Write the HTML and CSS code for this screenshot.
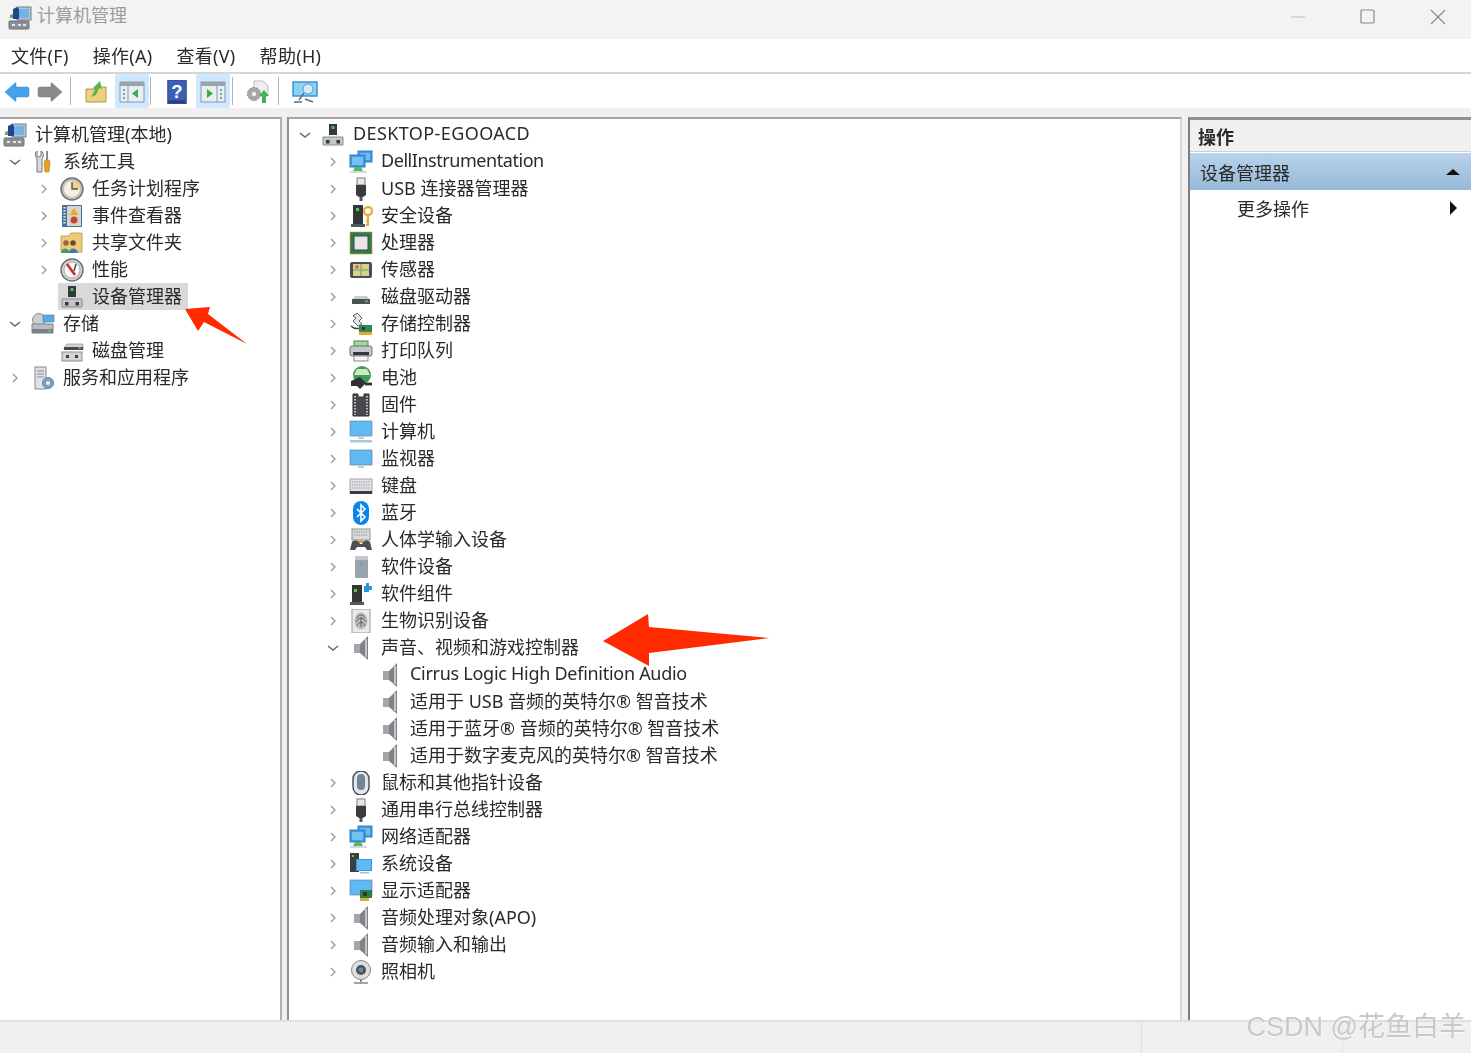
FILE: index.html
```html
<!DOCTYPE html>
<html>
<head>
  <meta charset="utf-8">
  <title>计算机管理</title>
  <link rel="stylesheet" href="styles.css">
</head>
<body>
  <!-- icon sprite -->
  <svg class="sprite" xmlns="http://www.w3.org/2000/svg">
    <symbol id="chev-r" viewBox="0 0 16 16"><path d="M6 4l4 4-4 4" fill="none" stroke="#9a9a9a" stroke-width="1.4"/></symbol>
    <symbol id="chev-d" viewBox="0 0 16 16"><path d="M3 6l5 4 5-4" fill="none" stroke="#666" stroke-width="1.4"/></symbol>

    <symbol id="mgmt" viewBox="0 0 24 24">
      <rect x="9" y="1" width="14" height="13" fill="#b9c4cf" stroke="#77808a"/><rect x="11" y="3" width="10" height="9" fill="#6fb3e8"/>
      <path d="M5 3l4-2 2 2v10H5z" fill="#23458f"/><path d="M2 9l3-1v4H2z" fill="#6aa85c"/>
      <rect x="1" y="15" width="20" height="8" rx="1" fill="#8b9097" stroke="#6a6f76"/><rect x="4" y="18" width="3" height="2" fill="#e4e6e8"/><rect x="10" y="18" width="3" height="2" fill="#e4e6e8"/><rect x="15" y="18" width="3" height="2" fill="#e4e6e8"/>
    </symbol>
    <symbol id="tools" viewBox="0 0 24 24">
      <path d="M6 1v5l2 1 2-1V1c2 1 3 3 2 6l-1 2v13H6V9L5 7C4 5 4 2 6 1z" fill="#d8dadc" stroke="#777"/>
      <rect x="15" y="1" width="2" height="9" fill="#8a8a8a"/><path d="M14 10h4l1 3-1 9h-4l-1-9z" fill="#e6a320" stroke="#b27a10" stroke-width=".6"/>
    </symbol>
    <symbol id="clock" viewBox="0 0 24 24">
      <circle cx="12" cy="12" r="11" fill="#c0c0bd" stroke="#6c6f72" stroke-width="1.4"/><circle cx="12" cy="12" r="8" fill="#f6f1df"/>
      <path d="M12 12V4a8 8 0 0 1 8 8z" fill="#f0d283"/><path d="M12 5v7h6" fill="none" stroke="#555" stroke-width="1.4"/>
    </symbol>
    <symbol id="event" viewBox="0 0 24 24">
      <rect x="2" y="1" width="20" height="22" rx="1" fill="#3f6f9f"/><rect x="7" y="2" width="14" height="20" fill="#d9d4c4"/>
      <path d="M4.500 3v18" stroke="#dbe1e7" stroke-width="2.4" stroke-dasharray="1.5 1.5"/>
      <path d="M14 4l4 7h-8z" fill="#e8a820"/><circle cx="14" cy="16" r="3.500" fill="#c9433a"/>
    </symbol>
    <symbol id="shared" viewBox="0 0 24 24">
      <path d="M1 5h8l2-3h11v19H1z" fill="#eecb78" stroke="#b1924a" stroke-width=".8"/>
      <circle cx="6" cy="12" r="2.800" fill="#a0623a"/><circle cx="13" cy="12" r="2.800" fill="#6e4a30"/>
      <path d="M1 22c0-6 8-6 9 0z" fill="#3f9e63"/><path d="M9 22c0-6 8-6 9 0z" fill="#3b78c2"/>
    </symbol>
    <symbol id="perf" viewBox="0 0 24 24">
      <circle cx="12" cy="12" r="11" fill="#d2d2d2" stroke="#6c6e70" stroke-width="1.4"/><circle cx="12" cy="12" r="8" fill="#fbfbfb" stroke="#a9a9a9"/>
      <path d="M7 6l8 11" stroke="#c9302c" stroke-width="2.6"/><path d="M16 6l-2 7" stroke="#444" stroke-width="1.4"/>
    </symbol>
    <symbol id="devmgr" viewBox="0 0 24 24">
      <rect x="8" y="1" width="8" height="11" fill="#34373b"/><rect x="10.500" y="3" width="3" height="3" fill="#58b85c"/>
      <path d="M2 14h20v8H2z" fill="#c4c6c8" stroke="#8b8d90"/><rect x="5" y="17" width="3.500" height="3.500" fill="#34373b"/><rect x="15.500" y="17" width="3.500" height="3.500" fill="#34373b"/>
    </symbol>
    <symbol id="storage" viewBox="0 0 24 24">
      <circle cx="8" cy="8" r="6.500" fill="#c9cfd2" stroke="#868b8f"/><rect x="12" y="3" width="11" height="7" fill="#5ea9df" stroke="#3f83ba" stroke-width=".6"/>
      <path d="M1 12h21v9H1z" fill="#b9bdc0" stroke="#7a7e82"/><path d="M1 17h21v4H1z" fill="#7b8084"/><rect x="17" y="18" width="3" height="2" fill="#5fbf60"/>
    </symbol>
    <symbol id="diskmgmt" viewBox="0 0 24 24">
      <path d="M4 9l3-4h16v5H4z" fill="#d2d4d6" stroke="#7b7d80" stroke-width=".6"/><path d="M4 8h19v3H4z" fill="#44484c"/><rect x="18" y="8.500" width="3" height="1.400" fill="#54bf5a"/>
      <rect x="2" y="13" width="20" height="9" fill="#d2d4d6" stroke="#8b8d90"/><rect x="6" y="16" width="3" height="3" fill="#3b3f44"/><rect x="15" y="16" width="3" height="3" fill="#3b3f44"/>
    </symbol>
    <symbol id="services" viewBox="0 0 24 24">
      <rect x="4" y="1" width="11" height="22" fill="#dfe3e7" stroke="#858a90"/><path d="M6 5h7M6 8h7M6 11h7" stroke="#858a90"/>
      <circle cx="17" cy="17" r="5.500" fill="#7c9fc0" stroke="#5f86a9"/><circle cx="17" cy="17" r="2" fill="#eef2f6"/>
    </symbol>
    <symbol id="network" viewBox="0 0 24 24">
      <rect x="9" y="1" width="14" height="11" fill="#3f9be0" stroke="#2f7fbc"/><rect x="11" y="3" width="10" height="7" fill="#6bbcf2"/>
      <rect x="1" y="5" width="15" height="12" fill="#3f9be0" stroke="#2f7fbc"/><rect x="3" y="7" width="11" height="8" fill="#74c1f4"/>
      <path d="M6 17h6l2 4H4z" fill="#58b85c"/><rect x="1" y="21" width="17" height="2" fill="#d7dadc"/>
    </symbol>
    <symbol id="usb" viewBox="0 0 24 24">
      <rect x="8" y="1" width="8" height="7" fill="#e6e8ea" stroke="#7a7d80"/><path d="M7 8h10v10l-3 2h-4l-3-2z" fill="#3a3c3f"/><rect x="10.500" y="20" width="3" height="4" fill="#555"/>
    </symbol>
    <symbol id="security" viewBox="0 0 24 24">
      <rect x="4" y="1" width="10" height="19" fill="#34373a"/><rect x="7" y="4" width="3" height="3" fill="#52c75a"/><rect x="2" y="20" width="14" height="3" fill="#55585b"/>
      <circle cx="19" cy="7" r="4" fill="none" stroke="#e3b23c" stroke-width="2.4"/><path d="M19 11v11M19 17h-2M19 21h-2" stroke="#e3b23c" stroke-width="2.2"/>
    </symbol>
    <symbol id="cpu" viewBox="0 0 24 24">
      <rect x="1" y="1" width="22" height="22" fill="#2f7d4a" stroke="#c79a3a" stroke-dasharray="1.5 1"/><rect x="5" y="5" width="14" height="14" fill="#e6e7e4" stroke="#444"/>
    </symbol>
    <symbol id="sensor" viewBox="0 0 24 24">
      <rect x="1" y="4" width="22" height="16" rx="2" fill="#4a4d51"/><rect x="4" y="6" width="16" height="12" fill="#d7d08e"/><path d="M4 12h16M12 6v12" stroke="#8bb56c" stroke-width="1.600"/><circle cx="8" cy="9" r="2" fill="#d96a5a"/>
    </symbol>
    <symbol id="drive" viewBox="0 0 24 24">
      <path d="M4 14l2-3h12l2 3z" fill="#c9cbcd"/><rect x="3" y="14" width="18" height="5" fill="#4d5156"/><rect x="16" y="15.500" width="3" height="1.600" fill="#55c05c"/>
    </symbol>
    <symbol id="storctl" viewBox="0 0 24 24">
      <path d="M8 1l5 5-3 3 3 3-4 2-5-5 3-3-3-2z" fill="#e4e5e6" stroke="#5c5f63"/><path d="M2 14c3 3 6 3 9 2" fill="none" stroke="#444" stroke-width="1.600"/>
      <rect x="10" y="13" width="13" height="7" fill="#2f8a58"/><rect x="13" y="15" width="3" height="3" fill="#333"/><rect x="10" y="20" width="13" height="3" fill="#e3a92c"/>
    </symbol>
    <symbol id="printer" viewBox="0 0 24 24">
      <rect x="5" y="2" width="14" height="6" fill="#9adf8f" stroke="#6e7175"/><rect x="1" y="7" width="22" height="10" rx="2" fill="#c5c8cb" stroke="#6e7175"/><rect x="4" y="13" width="16" height="3" fill="#33363a"/><rect x="5" y="17" width="14" height="5" fill="#f4f4f4" stroke="#888"/>
    </symbol>
    <symbol id="battery" viewBox="0 0 24 24">
      <circle cx="13" cy="9" r="9" fill="#3f9e4f"/><path d="M8 3h10l3 6H5z" fill="#cfe8c8"/><path d="M2 15l9-4 6 6-6 6-3-3H2z" fill="#2f3235"/><path d="M16 18h7" stroke="#2f3235" stroke-width="2.800"/>
    </symbol>
    <symbol id="firmware" viewBox="0 0 24 24">
      <path d="M4 1h5v3h6V1h5v22H4z" fill="#47494c" stroke="#2c2e30"/><path d="M6 3v19M18 3v19" stroke="#d9d9d9" stroke-dasharray="1.5 1.5" stroke-width="1.600"/>
    </symbol>
    <symbol id="computer" viewBox="0 0 24 24">
      <rect x="1" y="1" width="22" height="15" fill="#2d9be8" stroke="#9fb0bc"/><rect x="2" y="2" width="20" height="13" fill="#5fb9f3"/><rect x="9" y="16" width="6" height="3" fill="#c9ced2"/><rect x="1" y="20" width="22" height="2.500" fill="#a9c8dc"/>
    </symbol>
    <symbol id="monitor" viewBox="0 0 24 24">
      <rect x="1" y="3" width="22" height="15" fill="#2d9be8" stroke="#8fadc4"/><rect x="2" y="4" width="20" height="13" fill="#5fb9f3"/><rect x="9" y="18" width="6" height="3" fill="#c9ced2"/>
    </symbol>
    <symbol id="keyboard" viewBox="0 0 24 24">
      <rect x="1" y="5" width="22" height="14" fill="#dfe1e3" stroke="#a3a6a9"/><path d="M3 8h18M3 11h18M3 14h18" stroke="#a3a6a9" stroke-dasharray="1.5 .8"/><rect x="1" y="17" width="22" height="3" fill="#3a3d40"/>
    </symbol>
    <symbol id="bluetooth" viewBox="0 0 24 24">
      <rect x="4" y="0" width="16" height="24" rx="8" fill="#0a84e6"/><path d="M8 8l8 8-4 4V4l4 4-8 8" fill="none" stroke="#fff" stroke-width="1.600"/>
    </symbol>
    <symbol id="hid" viewBox="0 0 24 24">
      <rect x="3" y="1" width="18" height="11" fill="#d9dbdd" stroke="#8e9194"/><path d="M5 4h14M5 7h14" stroke="#8e9194" stroke-dasharray="1.5 .8"/>
      <path d="M1 22l2-8c1-2 6-2 7 0l1 2h2l1-2c1-2 6-2 7 0l2 8h-5l-2-3H8l-2 3z" fill="#4c5055"/><rect x="10" y="12" width="4" height="3" fill="#e3a03c"/>
    </symbol>
    <symbol id="softdev" viewBox="0 0 24 24">
      <rect x="6" y="1" width="13" height="22" rx="1" fill="#9aa3ab"/><rect x="6" y="1" width="13" height="4" fill="#c2c8ce"/><circle cx="12.500" cy="9" r="1.500" fill="#4aa0e0"/>
    </symbol>
    <symbol id="softcomp" viewBox="0 0 24 24">
      <rect x="3" y="3" width="10" height="17" fill="#34373a"/><rect x="5" y="7" width="3" height="3" fill="#52c75a"/><rect x="1" y="20" width="14" height="3" fill="#55585b"/>
      <path d="M15 4h2V1h3v3h3v4h-3v2h-5z" fill="#2b96dc"/>
    </symbol>
    <symbol id="biometric" viewBox="0 0 24 24">
      <rect x="3" y="0" width="18" height="24" fill="#e9eaeb" stroke="#9a9c9e"/><ellipse cx="12" cy="12" rx="6.500" ry="8.500" fill="#bcbcbc"/>
      <path d="M8 9c2-4 6-4 8 0M7 13c2-5 8-5 10 0M8 17c2-5 6-5 8 0M12 8v10" fill="none" stroke="#5d5f61"/>
    </symbol>
    <symbol id="speaker" viewBox="0 0 24 24">
      <rect x="5" y="8" width="6" height="9" fill="#a3a5a8"/><path d="M11 8l8-8v24l-8-7z" fill="#7f8387"/><path d="M17 3v18" stroke="#c4c6c8" stroke-width="2"/>
    </symbol>
    <symbol id="mouse" viewBox="0 0 24 24">
      <rect x="4" y="0" width="16" height="24" rx="8" fill="#e3e6e9" stroke="#424a55" stroke-width="1.400"/><rect x="8" y="3" width="8" height="16" rx="4" fill="#71859a"/>
    </symbol>
    <symbol id="sysdev" viewBox="0 0 24 24">
      <rect x="1" y="1" width="9" height="19" fill="#3b3e41"/><rect x="3" y="3" width="2" height="2" fill="#52c75a"/>
      <rect x="7" y="7" width="16" height="12" fill="#2d9be8"/><rect x="8" y="8" width="14" height="10" fill="#5fb9f3"/><rect x="11" y="20" width="9" height="1.500" fill="#a9bdcc"/>
    </symbol>
    <symbol id="display" viewBox="0 0 24 24">
      <rect x="1" y="1" width="22" height="15" fill="#2d9be8" stroke="#8fadc4"/><rect x="2" y="2" width="20" height="13" fill="#5fb9f3"/>
      <rect x="11" y="11" width="12" height="8" fill="#2f7d4a"/><rect x="14" y="13" width="4" height="4" fill="#333"/><rect x="11" y="19" width="9" height="3" fill="#e3a92c"/>
    </symbol>
    <symbol id="camera" viewBox="0 0 24 24">
      <circle cx="12" cy="10" r="9.500" fill="#dedfe0" stroke="#85888b"/><circle cx="12" cy="10" r="5" fill="#4e5256"/><circle cx="12" cy="10" r="2.400" fill="#5d8fb6"/><path d="M12 20v2" stroke="#85888b" stroke-width="2"/><rect x="5" y="22" width="14" height="2" fill="#a3a6a9"/>
    </symbol>

    <symbol id="tb-back" viewBox="0 0 26 24"><path d="M1 12L11 3q1-1 1 1v3h11q2 0 2 2v6q0 2-2 2H12v3q0 2-1 1z" fill="#42a3ea" stroke="#2f86c9" stroke-width=".5"/></symbol>
    <symbol id="tb-forward" viewBox="0 0 26 24"><path d="M25 12L15 3q-1-1-1 1v3H3q-2 0-2 2v6q0 2 2 2h11v3q0 2 1 1z" fill="#8a8a8a" stroke="#777" stroke-width=".5"/></symbol>
    <symbol id="tb-folder" viewBox="0 0 24 24"><path d="M2 9h8l2-2h10v15H2z" fill="#efd083" stroke="#b3954e"/><path d="M7 17l4-7-2-2 7-7 2 8-3-1-3 7z" fill="#58b34c"/></symbol>
    <symbol id="tb-pane-l" viewBox="0 0 26 24"><rect x="1" y="2" width="24" height="20" fill="#eaeef0" stroke="#8d99a2"/><rect x="1" y="2" width="24" height="4" fill="#98a4ad"/><path d="M9 6v16" stroke="#8d99a2"/><path d="M4 10h2M4 14h2M4 18h2" stroke="#6ba5d2" stroke-width="2"/><path d="M19 9v9l-6-4.500z" fill="#3caa4a"/></symbol>
    <symbol id="tb-pane-r" viewBox="0 0 26 24"><rect x="1" y="2" width="24" height="20" fill="#eaeef0" stroke="#8d99a2"/><rect x="1" y="2" width="24" height="4" fill="#98a4ad"/><path d="M17 6v16" stroke="#8d99a2"/><path d="M20 10h2M20 14h2M20 18h2" stroke="#6ba5d2" stroke-width="2"/><path d="M7 9v9l6-4.500z" fill="#3caa4a"/></symbol>
    <symbol id="tb-help" viewBox="0 0 20 26"><rect x="0" y="0" width="20" height="26" fill="#3e5fb8" stroke="#2a3f7c"/><rect x="1" y="22" width="18" height="3" fill="#2a3f7c"/><text x="10" y="19" class="help-mark">?</text></symbol>
    <symbol id="tb-export" viewBox="0 0 24 24"><path d="M8 1h9l5 5v10H8z" fill="#eee" stroke="#bbb"/><circle cx="8" cy="14" r="6.500" fill="#a5a8ab" stroke="#888" stroke-dasharray="2.500 1"/><circle cx="8" cy="14" r="2.200" fill="#eee"/><path d="M18 10l5 6h-3v7h-4v-7h-3z" fill="#3fb54c"/></symbol>
    <symbol id="tb-screen" viewBox="0 0 26 24"><rect x="1" y="2" width="24" height="14" fill="#8fd0f5" stroke="#2f8fd0" stroke-width="1.400"/><circle cx="16" cy="9" r="5" fill="#d2ecfb" stroke="#5f9dc5"/><path d="M12 13l-5 7M2 22h8M13 19l8 3" stroke="#56707f" stroke-width="1.400"/></symbol>
  </svg>

  <div class="window">
    <header class="titlebar">
      <svg class="title-icon"><use href="#mgmt"/></svg>
      <span class="title-text">计算机管理</span>
      <div class="win-controls">
        <svg class="win-btn" viewBox="0 0 16 16"><path d="M1 8h14" stroke="#c4c4c4" stroke-width="1.2"/></svg>
        <svg class="win-btn" viewBox="0 0 16 16"><rect x="1" y="1" width="13" height="13" rx="1" fill="none" stroke="#8a8a8a" stroke-width="1.200"/></svg>
        <svg class="win-btn" viewBox="0 0 16 16"><path d="M1 1l14 14M15 1L1 15" stroke="#8a8a8a" stroke-width="1.200"/></svg>
      </div>
    </header>

    <nav class="menubar">
      <span class="menu-item">文件(F)</span>
      <span class="menu-item">操作(A)</span>
      <span class="menu-item">查看(V)</span>
      <span class="menu-item">帮助(H)</span>
    </nav>

    <div class="toolbar">
      <button class="tool tool-nav"><svg class="ico-tb"><use href="#tb-back"/></svg></button>
      <button class="tool tool-nav"><svg class="ico-tb"><use href="#tb-forward"/></svg></button>
      <i class="tool-sep sep-a"></i>
      <button class="tool tool-folder"><svg class="ico-tb"><use href="#tb-folder"/></svg></button>
      <button class="tool tool-on tool-on-a"><svg class="ico-tb"><use href="#tb-pane-l"/></svg></button>
      <i class="tool-sep sep-b"></i>
      <button class="tool tool-help"><svg class="ico-tb"><use href="#tb-help"/></svg></button>
      <button class="tool tool-on tool-on-b"><svg class="ico-tb"><use href="#tb-pane-r"/></svg></button>
      <i class="tool-sep sep-c"></i>
      <button class="tool tool-export"><svg class="ico-tb"><use href="#tb-export"/></svg></button>
      <i class="tool-sep sep-c"></i>
      <button class="tool tool-screen"><svg class="ico-tb"><use href="#tb-screen"/></svg></button>
    </div>

    <main class="panes">
      <section class="pane pane-left">
        <div class="row lv0"><span class="node"><svg class="ico"><use href="#mgmt"/></svg>计算机管理(本地)</span></div>
        <div class="row lv1"><svg class="chev"><use href="#chev-d"/></svg><span class="node"><svg class="ico"><use href="#tools"/></svg>系统工具</span></div>
        <div class="row lv2"><svg class="chev"><use href="#chev-r"/></svg><span class="node"><svg class="ico"><use href="#clock"/></svg>任务计划程序</span></div>
        <div class="row lv2"><svg class="chev"><use href="#chev-r"/></svg><span class="node"><svg class="ico"><use href="#event"/></svg>事件查看器</span></div>
        <div class="row lv2"><svg class="chev"><use href="#chev-r"/></svg><span class="node"><svg class="ico"><use href="#shared"/></svg>共享文件夹</span></div>
        <div class="row lv2"><svg class="chev"><use href="#chev-r"/></svg><span class="node"><svg class="ico"><use href="#perf"/></svg>性能</span></div>
        <div class="row lv2"><span class="chev"></span><span class="node selected"><svg class="ico"><use href="#devmgr"/></svg>设备管理器</span></div>
        <div class="row lv1"><svg class="chev"><use href="#chev-d"/></svg><span class="node"><svg class="ico"><use href="#storage"/></svg>存储</span></div>
        <div class="row lv2"><span class="chev"></span><span class="node"><svg class="ico"><use href="#diskmgmt"/></svg>磁盘管理</span></div>
        <div class="row lv1"><svg class="chev"><use href="#chev-r"/></svg><span class="node"><svg class="ico"><use href="#services"/></svg>服务和应用程序</span></div>
      </section>

      <section class="pane pane-center">
        <div class="row lv1"><svg class="chev"><use href="#chev-d"/></svg><span class="node lat-host"><svg class="ico"><use href="#devmgr"/></svg>DESKTOP-EGOOACD</span></div>
        <div class="row lv2"><svg class="chev"><use href="#chev-r"/></svg><span class="node lat-tight"><svg class="ico"><use href="#network"/></svg>DellInstrumentation</span></div>
        <div class="row lv2"><svg class="chev"><use href="#chev-r"/></svg><span class="node"><svg class="ico"><use href="#usb"/></svg>USB 连接器管理器</span></div>
        <div class="row lv2"><svg class="chev"><use href="#chev-r"/></svg><span class="node"><svg class="ico"><use href="#security"/></svg>安全设备</span></div>
        <div class="row lv2"><svg class="chev"><use href="#chev-r"/></svg><span class="node"><svg class="ico"><use href="#cpu"/></svg>处理器</span></div>
        <div class="row lv2"><svg class="chev"><use href="#chev-r"/></svg><span class="node"><svg class="ico"><use href="#sensor"/></svg>传感器</span></div>
        <div class="row lv2"><svg class="chev"><use href="#chev-r"/></svg><span class="node"><svg class="ico"><use href="#drive"/></svg>磁盘驱动器</span></div>
        <div class="row lv2"><svg class="chev"><use href="#chev-r"/></svg><span class="node"><svg class="ico"><use href="#storctl"/></svg>存储控制器</span></div>
        <div class="row lv2"><svg class="chev"><use href="#chev-r"/></svg><span class="node"><svg class="ico"><use href="#printer"/></svg>打印队列</span></div>
        <div class="row lv2"><svg class="chev"><use href="#chev-r"/></svg><span class="node"><svg class="ico"><use href="#battery"/></svg>电池</span></div>
        <div class="row lv2"><svg class="chev"><use href="#chev-r"/></svg><span class="node"><svg class="ico"><use href="#firmware"/></svg>固件</span></div>
        <div class="row lv2"><svg class="chev"><use href="#chev-r"/></svg><span class="node"><svg class="ico"><use href="#computer"/></svg>计算机</span></div>
        <div class="row lv2"><svg class="chev"><use href="#chev-r"/></svg><span class="node"><svg class="ico"><use href="#monitor"/></svg>监视器</span></div>
        <div class="row lv2"><svg class="chev"><use href="#chev-r"/></svg><span class="node"><svg class="ico"><use href="#keyboard"/></svg>键盘</span></div>
        <div class="row lv2"><svg class="chev"><use href="#chev-r"/></svg><span class="node"><svg class="ico"><use href="#bluetooth"/></svg>蓝牙</span></div>
        <div class="row lv2"><svg class="chev"><use href="#chev-r"/></svg><span class="node"><svg class="ico"><use href="#hid"/></svg>人体学输入设备</span></div>
        <div class="row lv2"><svg class="chev"><use href="#chev-r"/></svg><span class="node"><svg class="ico"><use href="#softdev"/></svg>软件设备</span></div>
        <div class="row lv2"><svg class="chev"><use href="#chev-r"/></svg><span class="node"><svg class="ico"><use href="#softcomp"/></svg>软件组件</span></div>
        <div class="row lv2"><svg class="chev"><use href="#chev-r"/></svg><span class="node"><svg class="ico"><use href="#biometric"/></svg>生物识别设备</span></div>
        <div class="row lv2"><svg class="chev"><use href="#chev-d"/></svg><span class="node"><svg class="ico"><use href="#speaker"/></svg>声音、视频和游戏控制器</span></div>
        <div class="row lv3"><span class="chev"></span><span class="node lat-audio"><svg class="ico"><use href="#speaker"/></svg>Cirrus Logic High Definition Audio</span></div>
        <div class="row lv3"><span class="chev"></span><span class="node"><svg class="ico"><use href="#speaker"/></svg>适用于 USB 音频的英特尔® 智音技术</span></div>
        <div class="row lv3"><span class="chev"></span><span class="node"><svg class="ico"><use href="#speaker"/></svg>适用于蓝牙® 音频的英特尔® 智音技术</span></div>
        <div class="row lv3"><span class="chev"></span><span class="node"><svg class="ico"><use href="#speaker"/></svg>适用于数字麦克风的英特尔® 智音技术</span></div>
        <div class="row lv2"><svg class="chev"><use href="#chev-r"/></svg><span class="node"><svg class="ico"><use href="#mouse"/></svg>鼠标和其他指针设备</span></div>
        <div class="row lv2"><svg class="chev"><use href="#chev-r"/></svg><span class="node"><svg class="ico"><use href="#usb"/></svg>通用串行总线控制器</span></div>
        <div class="row lv2"><svg class="chev"><use href="#chev-r"/></svg><span class="node"><svg class="ico"><use href="#network"/></svg>网络适配器</span></div>
        <div class="row lv2"><svg class="chev"><use href="#chev-r"/></svg><span class="node"><svg class="ico"><use href="#sysdev"/></svg>系统设备</span></div>
        <div class="row lv2"><svg class="chev"><use href="#chev-r"/></svg><span class="node"><svg class="ico"><use href="#display"/></svg>显示适配器</span></div>
        <div class="row lv2"><svg class="chev"><use href="#chev-r"/></svg><span class="node"><svg class="ico"><use href="#speaker"/></svg>音频处理对象(APO)</span></div>
        <div class="row lv2"><svg class="chev"><use href="#chev-r"/></svg><span class="node"><svg class="ico"><use href="#speaker"/></svg>音频输入和输出</span></div>
        <div class="row lv2"><svg class="chev"><use href="#chev-r"/></svg><span class="node"><svg class="ico"><use href="#camera"/></svg>照相机</span></div>
      </section>

      <aside class="pane pane-right">
        <div class="action-head">操作</div>
        <div class="action-group"><span>设备管理器</span><i class="tri-up"></i></div>
        <div class="action-item"><span>更多操作</span><i class="tri-right"></i></div>
      </aside>
    </main>

    <footer class="statusbar">
      <span class="status-cell status-main"></span>
      <span class="status-cell status-mid"></span>
      <span class="status-cell status-end"></span>
    </footer>
  </div>

  <!-- red annotation arrows drawn over the screenshot -->
  <svg class="annot" viewBox="0 0 1471 1053">
    <polygon points="185,309 210,307 208,314 247,344 204,322 198,331" fill="#ff2a00"/>
    <polygon points="603,641 648,614 649,627 769,638 649,653 649,666" fill="#ff2a00"/>
  </svg>
  <div class="watermark">CSDN @花鱼白羊</div>
</body>
</html>
```

FILE: styles.css
```css
* {
  box-sizing: border-box;
}

body {
  margin: 0;
  width: 1471px;
  height: 1053px;
  overflow: hidden;
  background: #fff;
  color: #2a2a2a;
  font-family: "Noto Sans", "Noto Sans CJK SC", sans-serif;
  font-size: 18px;
}

.sprite {
  display: none;
}

.window {
  display: flex;
  flex-direction: column;
  height: 1053px;
  filter: blur(0.6px);
}

/* title bar */
.titlebar {
  display: flex;
  align-items: center;
  height: 39px;
  padding: 0 25px 9px 8px;
  background: #f3f3f3;
}

.title-icon {
  width: 24px;
  height: 24px;
  margin-right: 6px;
  margin-top: 6px;
}

.title-text {
  margin-bottom: 3px;
  margin-left: -1px;
  color: #9c9c9c;
}

.win-controls {
  display: flex;
  gap: 54px;
  margin-left: auto;
  margin-top: 3px;
}

.win-btn {
  width: 16px;
  height: 16px;
}

/* menu */
.menubar {
  display: flex;
  align-items: center;
  gap: 24px;
  height: 35px;
  padding: 0 0 2px 11px;
  border-bottom: 2px solid #d6d6d6;
  letter-spacing: 0.3px;
}

/* toolbar */
.toolbar {
  display: flex;
  align-items: stretch;
  height: 34px;
}

.tool {
  display: flex;
  align-items: center;
  justify-content: center;
  width: 34px;
  padding: 1px 0 0;
  border: 0;
  background: none;
}

.tool-nav {
  width: 33px;
}

.tool-on {
  border-radius: 2px;
  background: #cfe8ff;
}

.tool-folder {
  width: 30px;
  margin-left: 10px;
}

.tool-on-a {
  margin-left: 4px;
}

.tool-help {
  width: 28px;
  margin-left: 12px;
}

.tool-on-b {
  margin-left: 5px;
}

.tool-export {
  width: 36px;
  margin-left: 7px;
}

.tool-screen {
  width: 36px;
  margin-left: 8px;
}

.ico-tb {
  width: 26px;
  height: 24px;
}

.tool-sep {
  width: 1px;
  margin: 3px 0;
  background: #b5b5b5;
}

.sep-a {
  margin-left: 4px;
}

.sep-b {
  margin-left: 1px;
}

.sep-c {
  margin-left: 2px;
}

/* three panes */
.panes {
  flex: 1;
  display: flex;
  min-height: 0;
  padding-top: 9px;
  background: #f0f0f0;
}

.pane {
  background: #fff;
  overflow: hidden;
}

.pane-left {
  width: 282px;
  margin-right: 5px;
  padding-top: 2px;
  border-top: 2px solid #a6a6a6;
  border-right: 2px solid #b0b0b0;
}

.pane-center {
  flex: 1;
  margin-right: 6px;
  padding-top: 2px;
  border-top: 2px solid #a6a6a6;
  border-left: 2px solid #8f8f8f;
  border-right: 2px solid #d8d8d8;
}

.pane-right {
  width: 283px;
  border-top: 3px solid #8f8f8f;
  border-left: 2px solid #7f7f7f;
}

/* tree rows */
.row {
  display: flex;
  align-items: center;
  height: 27.03px;
  white-space: nowrap;
}

.lv0 {
  padding-left: 3px;
}

.lv1 {
  padding-left: 7px;
}

.lv2 {
  padding-left: 36px;
}

.lv3 {
  padding-left: 65px;
}

.pane-center .lv1 {
  padding-left: 8px;
}

.chev {
  flex: none;
  width: 16px;
  height: 16px;
}

/* bottom padding lifts the label, the icon's top margin puts it back */
.node {
  display: flex;
  align-items: center;
  gap: 8px;
  height: 27px;
  padding-bottom: 4px;
}

.lat-host {
  letter-spacing: 0.4px;
}

.lat-tight {
  letter-spacing: -0.45px;
}

.lat-audio {
  letter-spacing: -0.28px;
}

.row .chev + .node {
  margin-left: 8px;
}

.row .chev + .node.selected {
  margin-left: 6px;
  padding: 0 6px 4px 2px;
  background: #d9d9d9;
}

.ico {
  flex: none;
  width: 24px;
  height: 24px;
  margin-top: 4px;
}

/* action pane */
.action-head {
  display: flex;
  align-items: center;
  height: 32px;
  padding-left: 8px;
  border-bottom: 1px solid #cfcfcf;
  background: #f0f0f0;
  font-weight: 700;
}

.action-group {
  display: flex;
  align-items: center;
  justify-content: space-between;
  height: 37px;
  margin-top: 1px;
  padding: 0 11px 0 10px;
  background: linear-gradient(#b9d3ea, #96b8d8);
}

.tri-up {
  width: 0;
  height: 0;
  border-left: 7px solid transparent;
  border-right: 7px solid transparent;
  border-bottom: 6px solid #111;
}

.action-item {
  display: flex;
  align-items: center;
  justify-content: space-between;
  height: 36px;
  padding: 0 14px 0 47px;
}

.tri-right {
  width: 0;
  height: 0;
  border-top: 7px solid transparent;
  border-bottom: 7px solid transparent;
  border-left: 7px solid #111;
}

/* status bar */
.statusbar {
  display: flex;
  height: 33px;
  border-top: 2px solid #e0e0e0;
  background: #f0f0f0;
}

.status-main {
  width: 1142px;
  border-right: 1px solid #dedede;
}

.status-mid {
  width: 201px;
  border-right: 1px solid #e4e4e4;
}

.status-end {
  flex: 1;
}

/* overlays */
.annot {
  position: absolute;
  left: 0;
  top: 0;
  width: 1471px;
  height: 1053px;
  pointer-events: none;
}

.watermark {
  position: absolute;
  right: 5px;
  top: 1005px;
  color: #c9c9c9;
  font-family: "Liberation Sans", "Noto Sans CJK SC", sans-serif;
  font-size: 27px;
  text-shadow: 0 1px 1px #f8f8f8;
}

.help-mark {
  fill: #fff;
  font-size: 20px;
  font-weight: 700;
  text-anchor: middle;
}
```
